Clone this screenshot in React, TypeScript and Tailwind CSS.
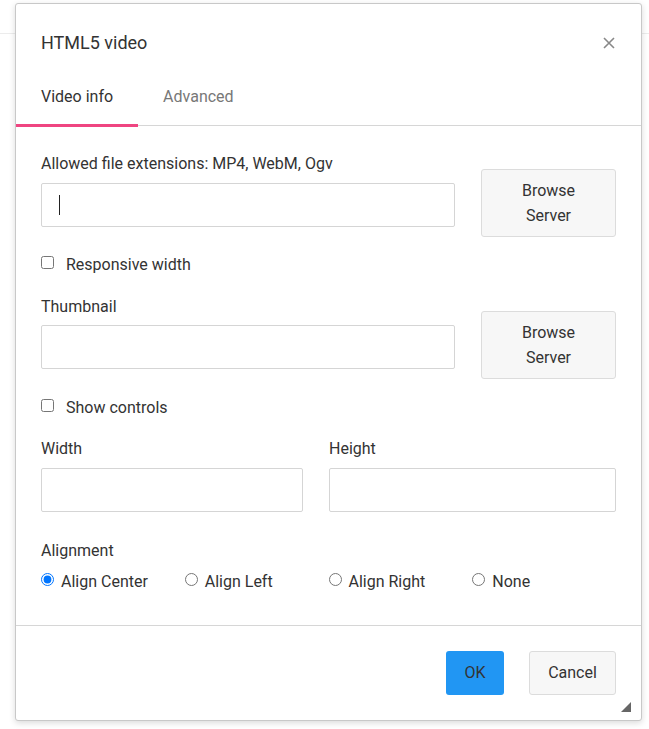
import React from "react";

const font = { fontFamily: "Roboto, 'Liberation Sans', sans-serif" };

const BrowseButton = ({ className = "" }: { className?: string }) => (
  <button
    className={`w-[135px] h-[68px] shrink-0 bg-[#f7f7f7] border border-[#dcdcdc] rounded-[3px] text-[16px] leading-[25px] text-[#333] ${className}`}
  >
    Browse
    <br />
    Server
  </button>
);

const TextBox = ({ caret = false, className = "" }: { caret?: boolean; className?: string }) => (
  <div className={`h-[44px] border border-[#d5d5d5] rounded-[2px] bg-white flex items-center ${className}`}>
    {caret && <span className="ml-[17px] w-px h-[20px] bg-[#222]" />}
  </div>
);

const Check = ({ label }: { label: string }) => (
  <label className="flex items-center h-[22px] text-[16px] text-[#333]">
    <input type="checkbox" className="w-[13px] h-[13px] m-0 -mt-[3px]" />
    <span className="ml-[12px] mt-[1px]">{label}</span>
  </label>
);

const Radio = ({ label, checked = false }: { label: string; checked?: boolean }) => (
  <label className="flex items-center h-[22px] text-[16px] text-[#333]">
    <input type="radio" name="align" defaultChecked={checked} className="w-[13px] h-[13px] m-0 -mt-[4px]" />
    <span className="ml-[7px] mt-[1px]">{label}</span>
  </label>
);

export default function App() {
  return (
    <div className="relative w-[649px] h-[729px] bg-white overflow-hidden" style={font}>
      {/* page behind the dialog */}
      <div className="h-[34px] border-b border-[#ececec]" />

      <div className="absolute left-[15px] top-[3px] w-[627px] h-[718px] bg-white border border-[#c8c8c8] rounded-[3px] shadow-[0_2px_6px_rgba(0,0,0,0.15)] flex flex-col">
        {/* header */}
        <div className="h-[77px] px-[25px] flex items-center justify-between">
          <h1 className="text-[18px] text-[#333] font-normal">HTML5 video</h1>
          <svg width="12" height="12" viewBox="0 0 12 12" className="mr-[1px]">
            <path d="M1 1L11 11M11 1L1 11" stroke="#888" strokeWidth="1.6" />
          </svg>
        </div>

        {/* tabs */}
        <div className="h-[45px] border-b border-[#d6d6d6] flex">
          <div className="relative px-[25px] pt-[5px] leading-[22px] text-[16px] text-[#333]">
            Video info
            <span className="absolute left-0 right-0 bottom-[-2px] h-[3px] bg-[#ef4581]" />
          </div>
          <div className="px-[25px] pt-[5px] leading-[22px] text-[16px] text-[#777]">Advanced</div>
        </div>

        {/* body */}
        <div className="flex-1 px-[25px] pt-[26px] text-[16px] text-[#333]">
          <div className="flex items-end gap-[26px]">
            <div className="flex-1">
              <div className="leading-[22px] mt-[1px]">Allowed file extensions: MP4, WebM, Ogv</div>
              <TextBox caret className="mt-[8px]" />
            </div>
            <BrowseButton className="-mb-[10px]" />
          </div>

          <div className="mt-[26px]">
            <Check label="Responsive width" />
          </div>

          <div className="flex items-end gap-[26px] mt-[20px]">
            <div className="flex-1">
              <div className="leading-[22px] mt-[1px]">Thumbnail</div>
              <TextBox className="mt-[7px]" />
            </div>
            <BrowseButton className="-mb-[10px]" />
          </div>

          <div className="mt-[27px]">
            <Check label="Show controls" />
          </div>

          <div className="flex gap-[26px] mt-[19px]">
            <div className="w-[262px]">
              <div className="leading-[22px] mt-[1px]">Width</div>
              <TextBox className="mt-[8px]" />
            </div>
            <div className="flex-1">
              <div className="leading-[22px] mt-[1px]">Height</div>
              <TextBox className="mt-[8px]" />
            </div>
          </div>

          <div className="mt-[28px] leading-[22px]">Alignment</div>
          <div className="grid grid-cols-4 mt-[8px]">
            <Radio label="Align Center" checked />
            <Radio label="Align Left" />
            <Radio label="Align Right" />
            <Radio label="None" />
          </div>
        </div>

        {/* footer */}
        <div className="relative border-t border-[#d6d6d6] px-[25px] pt-[25px] pb-[25px] flex justify-end gap-[25px]">
          <button className="w-[58px] h-[44px] rounded-[3px] bg-[#2196f3] text-[16px] text-[#333]">OK</button>
          <button className="w-[87px] h-[44px] rounded-[3px] bg-[#f7f7f7] border border-[#dcdcdc] text-[16px] text-[#333]">
            Cancel
          </button>
          <svg width="10" height="10" viewBox="0 0 10 10" className="absolute right-[10px] bottom-[8px]">
            <path d="M10 0L10 10L0 10Z" fill="#666" />
          </svg>
        </div>
      </div>
    </div>
  );
}
